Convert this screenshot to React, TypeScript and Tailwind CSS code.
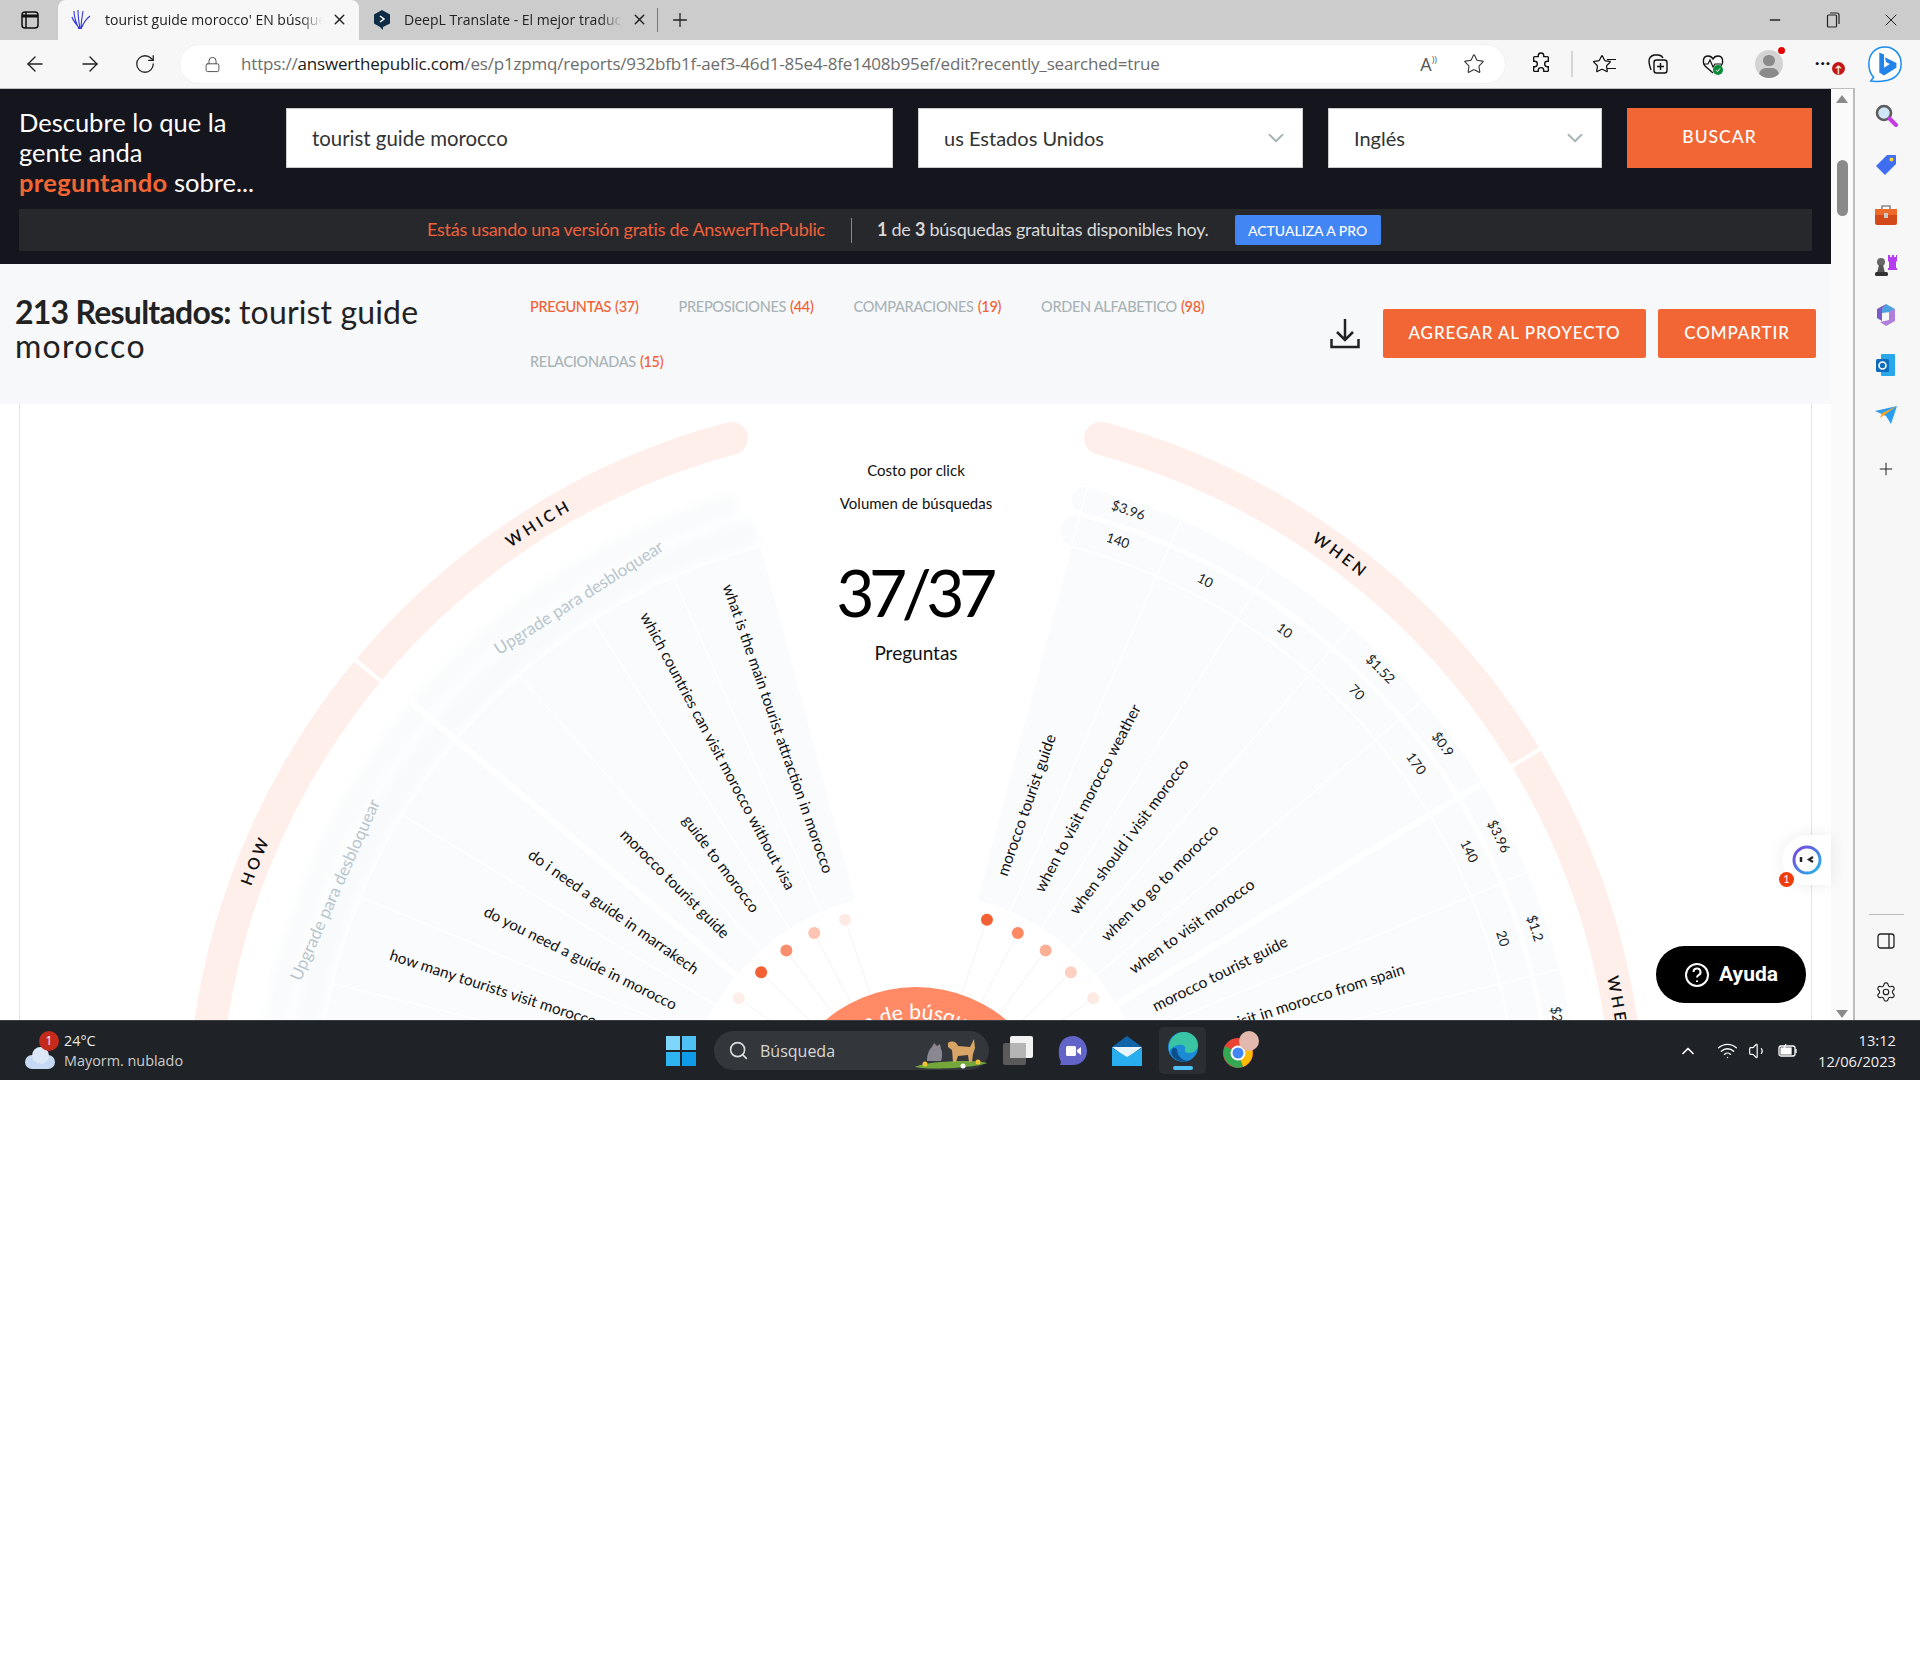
import {
  ArrowLeft,
  ArrowRight,
  ChevronDown,
  ChevronUp,
  Lock,
  Minus,
  Plus,
  RotateCw,
  Search,
  Settings,
  Star,
  Volume1,
  Wifi,
  X,
} from "lucide-react";

const CX = 896;
const CY = 723;

const pt = (r: number, deg: number) => {
  const a = (deg * Math.PI) / 180;
  return [CX + r * Math.sin(a), CY - r * Math.cos(a)];
};

const arc = (r: number, from: number, to: number) => {
  const [x1, y1] = pt(r, from);
  const [x2, y2] = pt(r, to);
  const large = Math.abs(to - from) > 180 ? 1 : 0;
  return `M${x1} ${y1}A${r} ${r} 0 ${large} ${to > from ? 1 : 0} ${x2} ${y2}`;
};

const sector = (r1: number, r2: number, from: number, to: number) => {
  const [a, b] = pt(r1, from);
  const [c, d] = pt(r2, from);
  const [e, f] = pt(r2, to);
  const [g, h] = pt(r1, to);
  const sw = to > from ? 1 : 0;
  return `M${a} ${b}L${c} ${d}A${r2} ${r2} 0 0 ${sw} ${e} ${f}L${g} ${h}A${r1} ${r1} 0 0 ${1 - sw} ${a} ${b}Z`;
};

const rightQuestions = [
  { a: 19.2, t: "morocco tourist guide" },
  { a: 27.8, t: "when to visit morocco weather" },
  { a: 36.5, t: "when should i visit morocco" },
  { a: 45.2, t: "when to go to morocco" },
  { a: 54.2, t: "when to visit morocco" },
  { a: 63.5, t: "morocco tourist guide" },
  { a: 72.2, t: "where to visit in morocco from spain" },
];

const leftQuestions = [
  { a: -19.3, t: "what is the main tourist attraction in morocco" },
  { a: -28, t: "which countries can visit morocco without visa" },
  { a: -36.8, t: "guide to morocco" },
  { a: -45, t: "morocco tourist guide" },
  { a: -54.8, t: "do i need a guide in marrakech" },
  { a: -63.5, t: "do you need a guide in morocco" },
  { a: -72, t: "how many tourists visit morocco each year" },
];

const metrics = [
  { a: 19, r: 651, t: "$3.96" },
  { a: 19, r: 619, t: "140" },
  { a: 27.9, r: 617, t: "10" },
  { a: 36.6, r: 617, t: "10" },
  { a: 45.4, r: 651, t: "$1.52" },
  { a: 45.4, r: 618, t: "70" },
  { a: 54, r: 650, t: "$0.9" },
  { a: 54, r: 617, t: "170" },
  { a: 63.5, r: 650, t: "$3.96" },
  { a: 63.5, r: 617, t: "140" },
  { a: 72.2, r: 649, t: "$1.2" },
  { a: 72.2, r: 615, t: "20" },
  { a: 80.5, r: 649, t: "$2.7" },
];

const dots = [
  { a: 18.9, c: "#f26033" },
  { a: 27.7, c: "#fb8a63" },
  { a: 36.3, c: "#fbaf94" },
  { a: 45, c: "#fdd0c2" },
  { a: 54, c: "#fdeae5" },
  { a: -18.9, c: "#fdeae5" },
  { a: -27.7, c: "#fdc4b3" },
  { a: -36.3, c: "#f98f6e" },
  { a: -45, c: "#f26033" },
  { a: -54, c: "#fdeeea" },
];

const thinRight = [15, 23.6, 32.3, 41, 49.9, 67.4, 76.2, 85];
const thinLeft = [-23.8, -32.5, -41.3, -58.7, -67.5, -76.2, -85];

function Wheel() {
  return (
    <svg width={1793} height={616} viewBox="0 0 1793 616" className="block [font-family:Lato,sans-serif]">
      <defs>
        <filter id="soft" x="-20%" y="-20%" width="140%" height="140%">
          <feGaussianBlur stdDeviation="5" />
        </filter>
        <path id="lb-which" d={arc(707, -49.5, -14.5)} />
        <path id="lb-how" d={arc(707, -86, -50)} />
        <path id="lb-when" d={arc(707, 14.6, 58.6)} />
        <path id="lb-where" d={arc(707, 61.3, 100.3)} />
        <path id="lb-center" d={arc(108, -68, 52)} />
      </defs>

      {/* outer ring */}
      <path d={arc(713, -15, -120)} fill="none" stroke="#ffefeb" strokeWidth={33} strokeLinecap="round" />
      <path d={arc(713, 15, 120)} fill="none" stroke="#ffefeb" strokeWidth={33} strokeLinecap="round" />
      {[pt(690, -50.2), pt(690, 58.8)].map(([x, y], i) => {
        const [x2, y2] = pt(734, i === 0 ? -50.2 : 58.8);
        return <line key={i} x1={x} y1={y} x2={x2} y2={y2} stroke="#fff" strokeWidth={4} />;
      })}

      {/* locked side, blurred */}
      <g filter="url(#soft)">
        <path d={sector(604, 630, -100, -15)} fill="#f8fafc" />
        <path d={sector(637, 660, -100, -16)} fill="#fafbfc" />
      </g>

      {/* rows */}
      <path d={sector(235, 600, -100, -15)} fill="#f9fbfd" />
      <path d={sector(235, 600, 15, 100)} fill="#f9fbfd" />
      <path d={arc(617, 15, 110)} fill="none" stroke="#f9fbfd" strokeWidth={30} strokeLinecap="round" />
      <path d={arc(649.5, 15, 110)} fill="none" stroke="#f9fbfd" strokeWidth={25} strokeLinecap="round" />

      {thinRight.map((a) => {
        const [x1, y1] = pt(235, a);
        const [x2, y2] = pt(662, a);
        return <line key={a} x1={x1} y1={y1} x2={x2} y2={y2} stroke="#fff" strokeWidth={1.5} />;
      })}
      {thinLeft.map((a) => {
        const [x1, y1] = pt(235, a);
        const [x2, y2] = pt(600, a);
        return <line key={a} x1={x1} y1={y1} x2={x2} y2={y2} stroke="#fff" strokeWidth={1.5} />;
      })}
      {[-49.9, 58.7].map((a) => {
        const [x1, y1] = pt(225, a);
        const [x2, y2] = pt(668, a);
        return <line key={a} x1={x1} y1={y1} x2={x2} y2={y2} stroke="#fff" strokeWidth={6} />;
      })}

      {/* spokes and dots */}
      {dots.map((d) => {
        const [x1, y1] = pt(140, d.a);
        const [x2, y2] = pt(219, d.a);
        return (
          <g key={d.a}>
            <line x1={x1} y1={y1} x2={x2} y2={y2} stroke="#f8f8f8" strokeWidth={1.5} />
            <circle cx={x2} cy={y2} r={6} fill={d.c} />
          </g>
        );
      })}

      {/* center */}
      <circle cx={CX} cy={CY} r={140} fill="#ff8a65" />
      <text fontSize={21} fill="#fff" textAnchor="middle">
        <textPath href="#lb-center" startOffset="50%">
          Volumen de búsquedas
        </textPath>
      </text>
      <text x={CX} y={72} fontSize={15} fill="#111" textAnchor="middle">
        Costo por click
      </text>
      <text x={CX} y={105} fontSize={15} fill="#111" textAnchor="middle">
        Volumen de búsquedas
      </text>
      <text x={CX - 2} y={213} fontSize={66} letterSpacing={-5.5} fill="#000" textAnchor="middle">
        37/37
      </text>
      <text x={CX} y={256} fontSize={19} fill="#111" textAnchor="middle">
        Preguntas
      </text>

      {/* ring labels */}
      {[
        { id: "lb-which", t: "WHICH" },
        { id: "lb-how", t: "HOW" },
        { id: "lb-when", t: "WHEN" },
        { id: "lb-where", t: "WHERE" },
      ].map((l) => (
        <text key={l.id} fontSize={16} fontWeight={600} letterSpacing={3.5} fill="#111" textAnchor="middle">
          <textPath href={`#${l.id}`} startOffset="50%">
            {l.t}
          </textPath>
        </text>
      ))}

      {/* questions */}
      {rightQuestions.map((q) => {
        const [x, y] = pt(266, q.a);
        return (
          <text key={q.a} x={x} y={y} fontSize={15.5} fill="#111" dominantBaseline="middle" transform={`rotate(${q.a - 90} ${x} ${y})`}>
            {q.t}
          </text>
        );
      })}
      {leftQuestions.map((q) => {
        const [x, y] = pt(269, q.a);
        return (
          <text key={q.a} x={x} y={y} fontSize={15.3} fill="#111" textAnchor="end" dominantBaseline="middle" transform={`rotate(${90 + q.a} ${x} ${y})`}>
            {q.t}
          </text>
        );
      })}
      {metrics.map((m, i) => {
        const [x, y] = pt(m.r, m.a);
        return (
          <text key={i} x={x} y={y} fontSize={13.5} fill="#222" textAnchor="middle" dominantBaseline="middle" transform={`rotate(${m.a} ${x} ${y})`}>
            {m.t}
          </text>
        );
      })}

      {/* upgrade labels */}
      {[
        { a: -32.5, rot: -32.5 },
        { a: -67.8, rot: -66 },
      ].map((u) => {
        const [x, y] = pt(626, u.a);
        return (
          <text key={u.a} x={x} y={y} fontSize={17} fill="#b8c5cc" textAnchor="middle" dominantBaseline="middle" transform={`rotate(${u.rot} ${x} ${y})`}>
            Upgrade para desbloquear
          </text>
        );
      })}
    </svg>
  );
}

function TabBar() {
  return (
    <div className="flex h-[40px] items-end bg-[#cccccc]">
      <div className="flex h-[40px] w-[58px] items-center justify-center pl-[2px]">
        <svg width="18" height="18" viewBox="0 0 18 18" fill="none" stroke="#111" strokeWidth="1.5">
          <rect x="1" y="1" width="16" height="16" rx="3" />
          <path d="M5 1v16" />
          <path d="M1 5h16" strokeWidth="3" />
        </svg>
      </div>
      <div className="flex h-[40px] w-[301px] items-center rounded-t-lg bg-[#f7f7f7] pb-[1px] pl-[13px]">
        <svg width="22" height="22" viewBox="0 0 22 22" fill="none" stroke="#2f35d8" strokeWidth="1.1">
          <path d="M8 20C5 14 3 8 3 2M9 20C8 14 7 7 7 1M10 20c0-6 1-12 2-18M10 20c2-5 5-10 9-13M9 20C6 16 2 12 1 8" />
        </svg>
        <span className="ml-[12px] w-[217px] overflow-hidden whitespace-nowrap text-[14px] text-[#222] [font-family:'Open_Sans',sans-serif] [mask-image:linear-gradient(90deg,#000_90%,transparent)]">
          tourist guide morocco' EN búsqueda
        </span>
        <X size={17} className="ml-[9px] text-[#222]" />
      </div>
      <div className="flex h-[40px] w-[298px] items-center pb-[1px] pl-[13px]">
        <svg width="20" height="22" viewBox="0 0 20 22">
          <path d="M10 1l8 4.5v9L11 18v3l-3-3-6-3.500v-9z" fill="#0f2b46" />
          <path d="M8 7l4 3-4 3" fill="none" stroke="#fff" strokeWidth="1.500" />
        </svg>
        <span className="ml-[12px] w-[218px] overflow-hidden whitespace-nowrap text-[14px] text-[#222] [font-family:'Open_Sans',sans-serif] [mask-image:linear-gradient(90deg,#000_90%,transparent)]">
          DeepL Translate - El mejor traductor
        </span>
        <X size={17} className="ml-[9px] text-[#222]" />
      </div>
      <div className="mb-[8px] h-[24px] w-px bg-[#777]" />
      <div className="flex h-[40px] w-[44px] items-center justify-center">
        <Plus size={22} strokeWidth={1.4} className="text-[#222]" />
      </div>
      <div className="ml-auto flex h-[40px] items-center">
        <div className="flex w-[58px] justify-center">
          <Minus size={16} className="text-[#222]" />
        </div>
        <div className="flex w-[58px] justify-center">
          <svg width="14" height="16" viewBox="0 0 14 16" fill="none" stroke="#222" strokeWidth="1.200">
            <rect x="1.500" y="3" width="9" height="12" rx="1" />
            <path d="M4 1h7a2 2 0 0 1 2 2v9" />
          </svg>
        </div>
        <div className="flex w-[58px] justify-center">
          <X size={20} strokeWidth={1.2} className="text-[#222]" />
        </div>
      </div>
    </div>
  );
}

function ToolBar() {
  return (
    <div className="flex h-[48px] items-center bg-[#f7f7f7] pl-[23px] text-[#222]">
      <ArrowLeft size={24} strokeWidth={1.4} />
      <ArrowRight size={24} strokeWidth={1.4} className="ml-[31px]" />
      <RotateCw size={22} strokeWidth={1.4} className="ml-[32px]" />
      <div className="ml-[24px] flex h-[38px] w-[1325px] items-center rounded-full bg-white pl-[24px] pr-[20px] shadow-[0_0_2px_rgba(0,0,0,0.08)]">
        <Lock size={17} strokeWidth={1.4} className="text-[#555]" />
        <span className="ml-[20px] whitespace-nowrap text-[17px] tracking-[-0.18px] text-[#6d6d6d] [font-family:'Open_Sans',sans-serif]">
          https://<span className="text-[#1a1a1a]">answerthepublic.com</span>/es/p1zpmq/reports/932bfb1f-aef3-46d1-85e4-8fe1408b95ef/edit?recently_searched=true
        </span>
        <div className="ml-auto flex items-center gap-[26px]">
          <span className="text-[18px] leading-none text-[#555] [font-family:'Open_Sans',sans-serif]">
            A<span className="align-top text-[9px]">))</span>
          </span>
          <Star size={22} strokeWidth={1.2} className="text-[#333]" />
        </div>
      </div>
      <svg className="ml-[25px]" width="22" height="24" viewBox="0 0 24 24" fill="none" stroke="#111" strokeWidth="1.500">
        <path d="M9 3a3 3 0 0 1 6 0v1h4a1 1 0 0 1 1 1v4h-1a3 3 0 0 0 0 6h1v4a1 1 0 0 1-1 1h-4v-1a3 3 0 0 0-6 0v1H5a1 1 0 0 1-1-1v-4h1a3 3 0 0 0 0-6H4V5a1 1 0 0 1 1-1h4z" />
      </svg>
      <div className="ml-[19px] h-[26px] w-[2px] bg-[#d5d5d5]" />
      <div className="relative ml-[19px] w-[24px]">
        <Star size={20} strokeWidth={1.5} className="text-[#111]" />
        <div className="absolute left-[15px] top-[5px] h-[10px] w-[9px] border-y-[1.5px] border-[#111]" />
      </div>
      <svg className="ml-[30px]" width="24" height="24" viewBox="0 0 24 24" fill="none" stroke="#111" strokeWidth="1.400">
        <rect x="8" y="8" width="13" height="13" rx="2.500" />
        <path d="M14.500 11v7M11 14.500h7M5 18c-1-3-2-6-2-9 0-3 2-5 5-6l4 0c2 0 4 1 5 3" />
      </svg>
      <svg className="ml-[31px]" width="24" height="24" viewBox="0 0 24 24" fill="none">
        <path d="M4 14C1 10 2 4 7 4c2 0 4 1 5 3 1-2 3-3 5-3 5 0 6 6 3 10M12 21l-8-7" stroke="#111" strokeWidth="1.400" />
        <path d="M2 12h5l2-4 3 7 2-3h6" stroke="#111" strokeWidth="1.200" />
        <circle cx="17" cy="18" r="5" fill="#0b8a3a" />
        <path d="M15 18l1.500 1.500 2.500-3" stroke="#fff" strokeWidth="1" />
      </svg>
      <div className="relative ml-[30px] h-[28px] w-[28px]">
        <div className="relative h-[28px] w-[28px] overflow-hidden rounded-full bg-[#d3d3d3]">
          <div className="absolute left-[8px] top-[5px] h-[11px] w-[12px] rounded-full bg-[#8a8a8a]" />
          <div className="absolute left-[4px] top-[18px] h-[14px] w-[20px] rounded-full bg-[#8a8a8a]" />
        </div>
        <div className="absolute right-[-2px] top-[-3px] h-[7px] w-[7px] rounded-full bg-[#e60000]" />
      </div>
      <div className="relative ml-[32px] h-[28px] w-[36px]">
        <div className="absolute left-[0px] top-[4px] text-[16px] font-bold leading-none tracking-[1px] text-[#111]">
          ···
        </div>
        <div className="absolute left-[17px] top-[12px] flex h-[13px] w-[13px] items-center justify-center rounded-full bg-[#c41616] text-[10px] font-bold leading-none text-white">
          ↑
        </div>
      </div>
      <svg className="ml-[15px]" width="38" height="40" viewBox="0 0 40 40">
        <path d="M20 2C9 2 3 10 3 20c0 6 2 11 5 14l-3 4c7 1 13 0 18-1 9-2 14-9 14-17C37 10 30 2 20 2z" fill="#fff" stroke="#1b8cf0" strokeWidth="1.600" />
        <path d="M14 8l5 2v14l6-4-4-2-1-5 12 6v5l-13 8-5-3z" fill="#2284e8" />
      </svg>
    </div>
  );
}

function PageHeader() {
  return (
    <div className="h-[175px] bg-[#14151d] px-[19px] pt-[19px]">
      <div className="flex h-[60px]">
        <div className="-mt-[1px] w-[267px] text-[25.5px] leading-[30px] text-white">
          Descubre lo que la
          <br />
          gente anda
          <br />
          <span className="font-bold tracking-[0.3px] text-[#f26633]">preguntando</span> sobre...
        </div>
        <div className="flex h-[60px] w-[607px] items-center border border-[#ccc] bg-white pl-[25px] text-[20.4px] text-[#333]">
          tourist guide morocco
        </div>
        <div className="ml-[25px] flex h-[60px] w-[385px] items-center justify-between border border-[#ccc] bg-white pl-[25px] pr-[13px] text-[20px] text-[#333]">
          us Estados Unidos
          <ChevronDown size={26} strokeWidth={1.8} className="text-[#a9b5b8]" />
        </div>
        <div className="ml-[25px] flex h-[60px] w-[274px] items-center justify-between border border-[#ccc] bg-white pl-[25px] pr-[13px] text-[20px] text-[#333]">
          Inglés
          <ChevronDown size={26} strokeWidth={1.8} className="text-[#a9b5b8]" />
        </div>
        <div className="ml-[25px] flex h-[60px] w-[185px] items-center justify-center bg-[#f26635] pb-[2px] text-[17.5px] font-medium tracking-[1px] text-white">
          BUSCAR
        </div>
      </div>
      <div className="mt-[41px] flex h-[42px] items-center bg-[#27282c] pl-[408px] text-[18px] tracking-[-0.25px]">
        <span className="pb-[2px] text-[#f2603a]">Estás usando una versión gratis de AnswerThePublic</span>
        <div className="ml-[26px] h-[25px] w-px bg-[#888]" />
        <span className="ml-[25px] pb-[2px] text-[#d8d8d8]">
          <b className="font-bold">1</b> de <b className="font-bold">3</b> búsquedas gratuitas disponibles hoy.
        </span>
        <div className="ml-[26px] flex h-[30px] w-[146px] items-center justify-center rounded-[2px] bg-[#4285f4] text-[14px] font-medium tracking-normal text-white">
          ACTUALIZA A PRO
        </div>
      </div>
    </div>
  );
}

const sections = [
  { label: "PREGUNTAS", n: "(37)", active: true },
  { label: "PREPOSICIONES", n: "(44)" },
  { label: "COMPARACIONES", n: "(19)" },
  { label: "ORDEN ALFABETICO", n: "(98)" },
  { label: "RELACIONADAS", n: "(15)" },
];

function ResultsBar() {
  return (
    <div className="flex h-[140px] bg-[#f7f8fa]">
      <div className="w-[530px] pl-[15px] pt-[31px] text-[32px] leading-[34px] text-[#222]">
        <b className="font-bold tracking-[-0.75px]">213 Resultados:</b> <span className="tracking-[0.15px]">tourist guide</span>
        <br />
        <span className="tracking-[1.3px]">morocco</span>
      </div>
      <div className="flex w-[760px] flex-wrap content-start gap-x-[40px] pt-[15px]">
        {sections.map((s) => (
          <div key={s.label} className={`flex h-[55px] items-center text-[14.5px] font-medium tracking-[-0.3px] ${s.active ? "text-[#f26033]" : "text-[#a9b3b6]"}`}>
            {s.label}
            <span className="ml-[4px] text-[#f26033]">{s.n}</span>
          </div>
        ))}
      </div>
      <svg className="ml-[40px] mt-[54px]" width="30" height="31" viewBox="0 0 30 31" fill="none" stroke="#222" strokeWidth="2.500">
        <path d="M15 1v21M7 14l8 8 8-8" />
        <path d="M1.500 21v8h27v-8" />
      </svg>
      <div className="ml-[23px] mt-[45px] flex h-[49px] w-[263px] items-center justify-center rounded-[2px] bg-[#f26635] pb-[2px] text-[17px] font-medium tracking-[0.9px] text-white">
        AGREGAR AL PROYECTO
      </div>
      <div className="ml-[12px] mt-[45px] flex h-[49px] w-[158px] items-center justify-center rounded-[2px] bg-[#f26635] pb-[2px] text-[17px] font-medium tracking-[0.9px] text-white">
        COMPARTIR
      </div>
    </div>
  );
}

function SideBar() {
  return (
    <div className="flex w-[67px] flex-col items-center border-l-2 border-[#bdbdbd] bg-[#f7f7f7] pr-[3px] pt-[2px]">
      <div className="flex h-[50px] items-center justify-center">
        <svg width="24" height="24" viewBox="0 0 24 24" fill="none">
          <circle cx="10" cy="10" r="7" fill="#cfe6f7" stroke="#5c5c5c" strokeWidth="2.600" />
          <path d="M15.500 15.500L22 22" stroke="#c23ce0" strokeWidth="4" strokeLinecap="round" />
        </svg>
      </div>
      <div className="flex h-[50px] items-center justify-center">
        <svg width="22" height="22" viewBox="0 0 22 22">
          <path d="M12 1h8a1 1 0 0 1 1 1v8L10 21 1 12z" fill="#3f6ff0" />
          <circle cx="16.500" cy="5.500" r="2" fill="#ffd02e" />
        </svg>
      </div>
      <div className="flex h-[50px] items-center justify-center">
        <svg width="24" height="22" viewBox="0 0 24 22">
          <path d="M8 5V2h8v3" fill="none" stroke="#8a8a8a" strokeWidth="1.600" />
          <rect x="1" y="5" width="22" height="16" rx="2" fill="#d4491a" />
          <rect x="1" y="5" width="22" height="6" fill="#ee6a2b" />
          <rect x="10" y="9" width="4" height="5" fill="#c9c9c9" />
        </svg>
      </div>
      <div className="flex h-[50px] items-center justify-center">
        <svg width="24" height="24" viewBox="0 0 24 24">
          <path d="M14 2h2v2h2V2h2v2h2V2h1v6l-1 1v6h1v2h-9v-2h1V9l-1-1z" fill="#b53cf0" />
          <circle cx="7" cy="9" r="4" fill="#666" />
          <path d="M5 12h4l2 8H3z" fill="#555" />
          <rect x="1" y="19" width="13" height="4" rx="1.500" fill="#333" />
        </svg>
      </div>
      <div className="flex h-[50px] items-center justify-center">
        <svg width="22" height="24" viewBox="0 0 22 24">
          <path d="M11 1l9 5-5 3-8 1V6z" fill="#4aa3df" />
          <path d="M2 6l9-5-4 5v12l-5-3z" fill="#7a5cc9" />
          <path d="M20 6v12l-9 5-6-4 9-2V9z" fill="#b07fdc" />
        </svg>
      </div>
      <div className="flex h-[50px] items-center justify-center">
        <svg width="22" height="24" viewBox="0 0 22 24">
          <rect x="6" y="1" width="14" height="22" rx="1" fill="#28a8ea" />
          <rect x="1" y="6" width="13" height="13" rx="1.500" fill="#0f6cbd" />
          <circle cx="7.500" cy="12.500" r="3.500" fill="none" stroke="#fff" strokeWidth="1.600" />
        </svg>
      </div>
      <div className="flex h-[50px] items-center justify-center">
        <svg width="24" height="20" viewBox="0 0 24 20">
          <path d="M1 6l22-5-6 18-5-8z" fill="#2a9df4" />
          <path d="M6 13L23 1 8 8z" fill="#f5a623" />
        </svg>
      </div>
      <div className="flex h-[58px] items-center justify-center">
        <Plus size={20} strokeWidth={1.2} className="text-[#222]" />
      </div>
      <div className="mt-auto h-px w-[35px] bg-[#bbb]" />
      <svg className="mt-[18px]" width="18" height="16" viewBox="0 0 18 16" fill="none" stroke="#222" strokeWidth="1.300">
        <rect x="1" y="1" width="16" height="14" rx="2.500" />
        <path d="M12 1v14" />
      </svg>
      <Settings size={22} strokeWidth={1.3} className="mb-[17px] mt-[32px] text-[#222]" />
    </div>
  );
}

function TaskBar() {
  return (
    <div className="flex h-[60px] items-center border-t border-[#3a3d42] bg-[#1f2226] text-white [font-family:'Open_Sans',sans-serif]">
      <div className="relative ml-[25px] h-[40px] w-[35px]">
        <div className="absolute bottom-[2px] left-[0px] h-[14px] w-[30px] rounded-full bg-[#c5d9f2]" />
        <div className="absolute bottom-[7px] left-[7px] h-[17px] w-[17px] rounded-full bg-[#dbe7f7]" />
        <div className="absolute left-[14px] top-[0px] flex h-[20px] w-[20px] items-center justify-center rounded-full bg-[#c42b1c] text-[12px] text-white">
          1
        </div>
      </div>
      <div className="ml-[4px] w-[118px] text-[14.4px] leading-[20px] text-[#e8e8e8]">
        <div>24°C</div>
        <div className="whitespace-nowrap text-[#ccc]">Mayorm. nublado</div>
      </div>
      <svg className="ml-[484px]" width="30" height="30" viewBox="0 0 30 30">
        <rect width="14" height="14" fill="#7fd6fb" />
        <rect x="16" width="14" height="14" fill="#4fc0f5" />
        <rect y="16" width="14" height="14" fill="#2fb4f3" />
        <rect x="16" y="16" width="14" height="14" fill="#0f9be8" />
      </svg>
      <div className="ml-[18px] flex h-[39px] w-[275px] items-center rounded-full bg-[#33363b] pl-[14px]">
        <Search size={21} strokeWidth={1.8} className="text-[#ddd]" />
        <span className="ml-[11px] w-[74px] text-[16px] text-[#d8d8d8]">Búsqueda</span>
        <svg className="ml-[79px]" width="76" height="36" viewBox="0 0 76 36">
          <path d="M2 34c10-6 60-8 72-4-4 3-50 8-72 4z" fill="#74a83a" />
          <path d="M14 28c0-6 2-12 5-14l2-4 3 3 3-2 1 5c2 4 1 10 0 12z" fill="#8a8790" />
          <path d="M35 10c4-3 9-1 10 3l12 1 4-8 1 9-2 6-1 8h-3l-1-7-10 1-2 6h-3l-1-12-4-3z" fill="#d8a566" />
          <circle cx="12" cy="31" r="2.500" fill="#f1c232" />
          <circle cx="50" cy="33" r="2.500" fill="#fff" />
          <circle cx="65" cy="29" r="2.500" fill="#f1c232" />
        </svg>
      </div>
      <svg className="ml-[13px]" width="32" height="32" viewBox="0 0 32 32">
        <rect x="1" y="8" width="23" height="22" rx="2" fill="#5a5a5a" />
        <rect x="8" y="1" width="23" height="22" rx="2" fill="#f2f2f2" />
        <rect x="8" y="8" width="16" height="15" fill="#b5b5b5" />
      </svg>
      <svg className="ml-[24px]" width="30" height="32" viewBox="0 0 30 32">
        <path d="M15 1c8 0 14 7 14 15s-6 14-14 14H2l1-3C-1 20-1 1 15 1z" fill="#6264c8" />
        <rect x="8" y="11" width="10" height="10" rx="1.500" fill="#fff" />
        <path d="M19 15l4-3v8l-4-3z" fill="#fff" />
      </svg>
      <svg className="ml-[24px]" width="30" height="30" viewBox="0 0 30 30">
        <path d="M15 0l15 11v19H0V11z" fill="#1264a8" />
        <path d="M0 11h30L15 22z" fill="#e8f4fb" />
        <path d="M0 12l15 9 15-9v18H0z" fill="#28aeee" />
      </svg>
      <div className="ml-[17px] flex h-[47px] w-[47px] flex-col items-center justify-center rounded-[5px] bg-[#2b2e33]">
        <svg width="30" height="30" viewBox="0 0 30 30">
          <circle cx="15" cy="15" r="15" fill="#1c8ad4" />
          <path d="M1 13C3 4 10 0 16 0c8 0 14 6 14 13 0 5-4 8-9 8-3 0-5-2-4-4 1-3-3-5-7-4-4 1-7 3-9 6z" fill="#39c4a4" />
          <path d="M9 17c0 6 4 12 12 12-5 2-14 0-17-6-2-5 1-9 5-6z" fill="#0b4f8f" />
        </svg>
        <div className="mt-[4px] h-[4px] w-[20px] rounded-full bg-[#4fc3f7]" />
      </div>
      <div className="relative ml-[17px] h-[36px] w-[32px]">
        <svg width="30" height="30" viewBox="0 0 30 30" className="mt-[5px]">
          <circle cx="15" cy="15" r="15" fill="#ea4335" />
          <path d="M15 15L28 8a15 15 0 0 1-8 21z" fill="#fbbc04" />
          <path d="M15 15l5 14A15 15 0 0 1 2 8z" fill="#34a853" />
          <circle cx="15" cy="15" r="6.500" fill="#4285f4" stroke="#fff" strokeWidth="2" />
        </svg>
        <div className="absolute -top-[2px] left-[16px] h-[20px] w-[20px] rounded-full bg-[#e3b9ad]" />
      </div>
      <ChevronUp size={20} className="ml-[423px] text-white" />
      <Wifi size={21} strokeWidth={1.6} className="ml-[19px] text-white" />
      <Volume1 size={20} strokeWidth={1.4} className="ml-[10px] text-white" />
      <svg className="ml-[10px]" width="20" height="20" viewBox="0 0 20 20" fill="none" stroke="#fff" strokeWidth="1.300">
        <rect x="1" y="5" width="16" height="10" rx="2" />
        <rect x="3" y="7" width="10" height="6" fill="#fff" />
        <path d="M18 8v4M8 3L6 7" />
      </svg>
      <div className="ml-[16px] w-[82px] text-right text-[14.7px] leading-[21px] text-[#eee]">
        <div>13:12</div>
        <div className="whitespace-nowrap">12/06/2023</div>
      </div>
    </div>
  );
}

export default function App() {
  return (
    <div className="h-[1658px] w-[1920px] overflow-hidden bg-white [font-family:Lato,sans-serif]">
      <TabBar />
      <ToolBar />
      <div className="flex h-[932px]">
        <div className="relative w-[1831px] border-t border-[#bdbdbd]">
          <PageHeader />
          <ResultsBar />
          <div className="mx-[19px] h-[616px] overflow-hidden border-x border-[#e2e4e6]">
            <Wheel />
          </div>
          <div className="absolute left-[1782px] top-[746px] flex h-[50px] w-[49px] items-center rounded-l-[25px] bg-white pl-[10px] shadow-[0_0_16px_rgba(0,0,0,0.08)]">
            <svg width="30" height="30" viewBox="0 0 30 30" fill="none">
              <defs>
                <linearGradient id="bot" x1="0" y1="0" x2="1" y2="1">
                  <stop offset="0" stopColor="#7a3fe0" />
                  <stop offset="1" stopColor="#22b8e8" />
                </linearGradient>
              </defs>
              <circle cx="15" cy="15" r="13" stroke="url(#bot)" strokeWidth="3" />
              <path d="M9 12v5" stroke="#222" strokeWidth="2.500" />
              <path d="M21 12l-4 2.500 4 2.500" stroke="#222" strokeWidth="2.200" />
            </svg>
          </div>
          <div className="absolute left-[1779px] top-[783px] flex h-[15px] w-[15px] items-center justify-center rounded-full bg-[#f03c0a] text-[11px] text-white">
            1
          </div>
          <div className="absolute left-[1656px] top-[857px] flex h-[57px] w-[150px] items-center justify-center gap-[9px] rounded-full bg-black text-[21px] font-bold text-white [font-family:Roboto,sans-serif]">
            <svg width="26" height="26" viewBox="0 0 26 26" fill="none" stroke="#fff" strokeWidth="2">
              <circle cx="13" cy="13" r="11" />
              <path d="M9.500 10a3.500 3.500 0 1 1 5 3.200c-1 .6-1.500 1.300-1.500 2.300" />
              <path d="M13 18.500v1.500" />
            </svg>
            Ayuda
          </div>
        </div>
        <div className="flex w-[22px] flex-col items-center justify-between border-t border-[#bdbdbd] bg-[#fafafa] pb-[2px] pt-[6px]">
          <div className="h-0 w-0 border-x-[6px] border-b-[8px] border-x-transparent border-b-[#8a8a8a]" />
          <div className="mb-auto mt-[57px] h-[56px] w-[11px] rounded-full bg-[#8a8a8a]" />
          <div className="h-0 w-0 border-x-[6px] border-t-[8px] border-x-transparent border-t-[#8a8a8a]" />
        </div>
        <SideBar />
      </div>
      <TaskBar />
    </div>
  );
}
